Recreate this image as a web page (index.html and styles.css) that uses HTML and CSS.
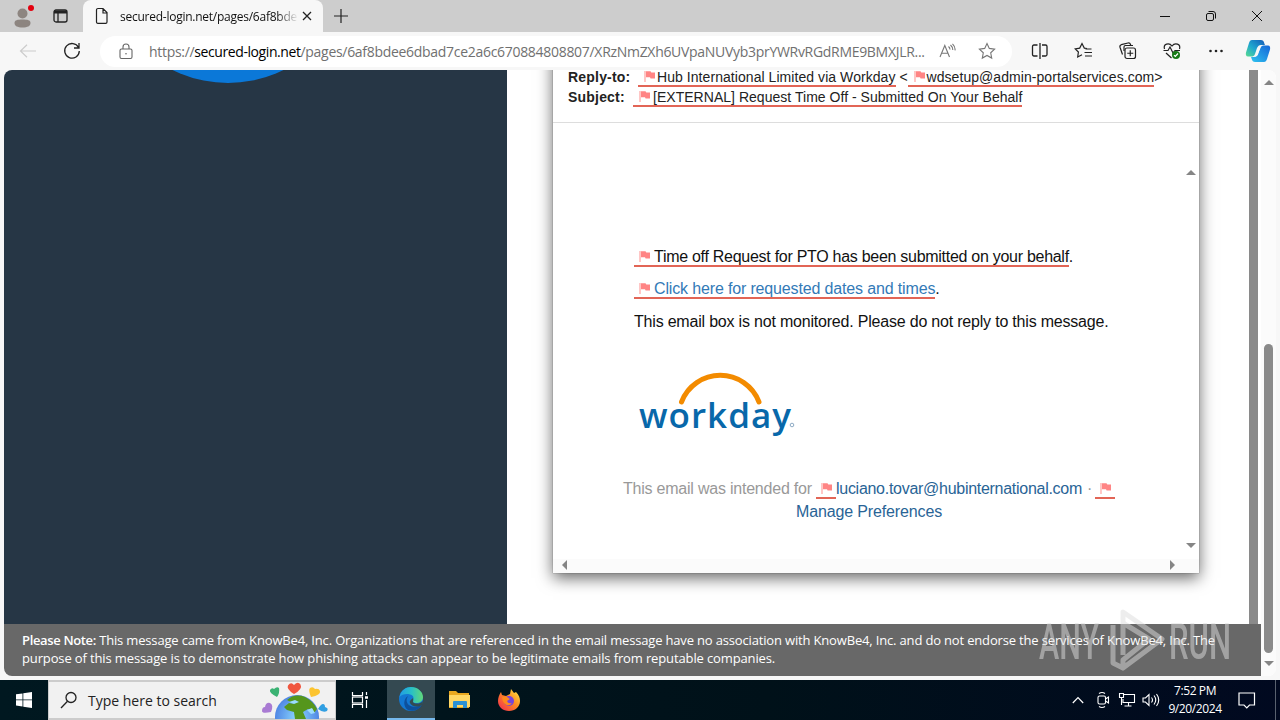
FILE: index.html
```html
<!DOCTYPE html>
<html lang="en">
<head>
  <meta charset="UTF-8">
  <title>secured-login.net</title>
  <link rel="stylesheet" href="styles.css">
</head>
<body>
  <svg class="defs" width="0" height="0">
    <symbol id="flag" viewBox="0 0 12 13">
      <path d="M1 1v11" stroke="#ffaaa8" stroke-width="1.3"/>
      <path d="M2 1.2h4.5l.8 1.3H11v6H6.6L6 7.3H2z" fill="#ff8585"/>
    </symbol>
  </svg>

  <div class="titlebar">
    <div class="profile">
      <svg width="22" height="26" viewBox="0 0 22 26">
        <circle cx="9.5" cy="11.5" r="5" fill="#8d8580"/>
        <path d="M1.5 21c0-3 3-3.500 8-3.500s8 .5 8 3.500-3 4.500-8 4.500-8-1.500-8-4.500z" fill="#8d8580"/>
        <circle cx="18" cy="6" r="3" fill="#e3000f"/>
      </svg>
    </div>
    <div class="workspaces">
      <svg width="16" height="16" viewBox="0 0 16 16" fill="none" stroke="#222" stroke-width="1.3">
        <rect x="1" y="2" width="13" height="12" rx="2"/>
        <path d="M1 4h13" stroke-width="3"/><path d="M5 5v9"/>
      </svg>
    </div>
    <div class="tab">
      <svg width="14" height="18" viewBox="0 0 14 18" fill="none" stroke="#222" stroke-width="1.2">
        <path d="M3 1.500h5l4 4V15a1.300 1.300 0 0 1-1.300 1.300H3A1.300 1.300 0 0 1 1.500 15V3A1.500 1.500 0 0 1 3 1.500zM8 1.500V6h4"/>
      </svg>
      <span class="tab-title">secured-login.net/pages/6af8bde</span>
      <svg width="10" height="10" viewBox="0 0 10 10" stroke="#222" stroke-width="1.3"><path d="M1 1l8 8M9 1l-8 8"/></svg>
    </div>
    <svg class="new-tab" width="14" height="14" viewBox="0 0 14 14" stroke="#222" stroke-width="1.2"><path d="M7 0v14M0 7h14"/></svg>
    <div class="window-buttons">
      <svg width="12" height="12" viewBox="0 0 12 12" stroke="#111"><path d="M1 6.500h10"/></svg>
      <svg width="12" height="12" viewBox="0 0 12 12" fill="none" stroke="#111"><rect x="1.500" y="3.500" width="7" height="7" rx="1.500"/><path d="M3.500 1.500H8A2.500 2.500 0 0 1 10.500 4v4.500"/></svg>
      <svg width="12" height="12" viewBox="0 0 12 12" stroke="#111"><path d="M1 1l10 10M11 1L1 11"/></svg>
    </div>
  </div>

  <div class="toolbar">
    <svg class="back" width="18" height="14" viewBox="0 0 18 14" fill="none" stroke="#ccc" stroke-width="1.2"><path d="M8 .8L1.500 7 8 13.200M1.500 7H17"/></svg>
    <svg class="reload" width="18" height="18" viewBox="0 0 18 18" fill="none" stroke="#222" stroke-width="1.300"><path d="M15.500 5.500A7.300 7.300 0 1 0 16.300 9M16 1v5h-5"/></svg>
    <div class="address">
      <svg width="14" height="17" viewBox="0 0 14 17" fill="none" stroke="#666" stroke-width="1.100"><rect x="1" y="6" width="12" height="9.500" rx="1.500"/><path d="M4 6V4a3 3 0 0 1 6 0v2"/><circle cx="7" cy="10.800" r=".8" fill="#666" stroke="none"/></svg>
      <span class="url">https://<b>secured-login.net</b>/pages/6af8bdee6dbad7ce2a6c670884808807/XRzNmZXh6UVpaNUVyb3prYWRvRGdRME9BMXJLR...</span>
      <svg class="read" width="17" height="16" viewBox="0 0 17 16" fill="none" stroke="#777" stroke-width="1.100"><path d="M1 14L5.800 2.500 10.500 14M2.700 10.200h6.200M9.500 3.500q1.500 1.200 1.500 3M11.500 2q2.300 2 2.300 5M13.500.8q3 3 2.500 6.500"/></svg>
      <svg class="star" width="18" height="18" viewBox="0 0 18 18" fill="none" stroke="#777" stroke-width="1.100"><path d="M9 1.500l2.300 4.900 5.300.7-3.900 3.700 1 5.300L9 13.500l-4.700 2.600 1-5.300L1.400 7.100l5.300-.7z"/></svg>
    </div>
    <div class="actions">
      <svg width="20" height="20" viewBox="0 0 20 20" fill="none" stroke="#222" stroke-width="1.300"><path d="M7.500 4H3.800A1.500 1.500 0 0 0 2.500 5.500v8A1.500 1.500 0 0 0 3.800 15h3.700M12 4h3.500A1.500 1.500 0 0 1 17 5.500v8a1.500 1.500 0 0 1-1.500 1.500H12M10 2v16"/></svg>
      <svg width="20" height="20" viewBox="0 0 20 20" fill="none" stroke="#222" stroke-width="1.200"><path d="M13 7.500l-2.700-.4L8 2.500 5.700 7.100l-4.500.7 3.200 3.200-.7 5L8 13.700M11.500 8h6M10.500 11.500H18M11 15h7"/></svg>
      <svg width="20" height="20" viewBox="0 0 20 20" fill="none" stroke="#222" stroke-width="1.200"><rect x="7" y="7" width="10.500" height="10.500" rx="2"/><path d="M12.250 9.300v6M9.250 12.250h6M4.500 13.500L2 6.200A2 2 0 0 1 3.300 3.700L10 2a2 2 0 0 1 2.400 1.300l.5 1.500M6 10V6q0-1.500 1.500-1.500H15"/></svg>
      <svg width="20" height="20" viewBox="0 0 20 20" fill="none" stroke="#222" stroke-width="1.200"><path d="M2.500 8C1 3 7 1 10 5c3-4 9-2 7.500 3M1.500 9.500H6l2-3.500 3 6 2-2.500h5M4 12l5.500 5"/><circle cx="14" cy="14" r="4" fill="#167a16" stroke="none"/><path d="M12 14.200l1.300 1.300L16 12.500" stroke="#fff"/></svg>
      <svg width="20" height="20" viewBox="0 0 20 20" fill="#222"><circle cx="4.500" cy="10" r="1.300"/><circle cx="10" cy="10" r="1.300"/><circle cx="15.500" cy="10" r="1.300"/></svg>
      <svg class="copilot" width="26" height="24" viewBox="0 0 26 24">
        <defs>
          <linearGradient id="cpA" x1="0" y1="1" x2="1" y2="0"><stop offset="0" stop-color="#58dc90"/><stop offset=".45" stop-color="#20a7cf"/><stop offset="1" stop-color="#1459b8"/></linearGradient>
          <linearGradient id="cpB" x1="0" y1="1" x2="1" y2="0"><stop offset="0" stop-color="#2fc3ef"/><stop offset="1" stop-color="#1465d8"/></linearGradient>
        </defs>
        <path d="M7 1h9c3 0 3 3 4 5h-4c-2 0-3 1-4 3l-2 6c-.6 2-2 2.500-4 2.500H3c-2 0-2.500-2-2-4L4 4c.6-2 1.500-3 3-3z" fill="url(#cpA)"/>
        <path d="M19 23h-9c-3 0-3-3-4-5h3c3 0 4-2 4.500-4l2-5c.6-2 2-2.500 4-2.500H23c2 0 2.500 2 2 4L22 20c-.6 2-1.500 3-3 3z" fill="url(#cpB)"/>
        <path d="M13.500 8l2.500-1.500-3.500 9.500-2.500 1.500z" fill="#f7f7f7"/>
      </svg>
    </div>
  </div>

  <div class="viewport">
    <div class="page">
      <div class="content">
        <div class="side"><div class="badge"></div></div>
        <div class="main">
          <div class="email">
            <div class="email-head">
              <div class="head-row reply"><b>Reply-to:</b><span class="flagged"><svg class="flag"><use href="#flag"/></svg>Hub International Limited via Workday</span><i>&lt;</i><span class="flagged second"><svg class="flag"><use href="#flag"/></svg>wdsetup@admin-portalservices.com</span><i>&gt;</i></div>
              <div class="head-row subject"><b>Subject:</b><span class="flagged"><svg class="flag"><use href="#flag"/></svg>[EXTERNAL] Request Time Off - Submitted On Your Behalf</span></div>
            </div>
            <div class="email-body">
              <div class="message">
                <p class="line"><span class="flagged l1"><svg class="flag"><use href="#flag"/></svg>Time off Request for PTO has been submitted on your behalf</span>.</p>
                <p class="line"><span class="flagged link l2"><svg class="flag"><use href="#flag"/></svg>Click here for requested dates and times</span>.</p>
                <p class="line plain">This email box is not monitored. Please do not reply to this message.</p>
                <svg class="workday" width="170" height="70" viewBox="0 0 170 70">
                  <path d="M47.500 33A41.500 41.500 0 0 1 125 33" fill="none" stroke="#f38b00" stroke-width="5" stroke-linecap="round"/>
                  <text x="5" y="59" textLength="152" lengthAdjust="spacing" class="workday-name">workday</text>
                  <circle cx="158" cy="56" r="1.800" fill="none" stroke="#8eabc5"/>
                </svg>
                <div class="foot">
                  <div class="foot-row"><span class="foot-text">This email was intended for</span><span class="flagged only"><svg class="flag"><use href="#flag"/></svg></span><a class="foot-mail">luciano.tovar@hubinternational.com</a><span class="dot">·</span><span class="flagged only"><svg class="flag"><use href="#flag"/></svg></span></div>
                  <div class="foot-prefs"><a>Manage Preferences</a></div>
                </div>
              </div>
              <div class="inner-scroll">
                <svg width="10" height="5"><path d="M0 5l5-5 5 5z"/></svg>
                <svg width="10" height="5"><path d="M0 0l5 5 5-5z"/></svg>
              </div>
            </div>
            <div class="bottom-scroll">
              <svg width="5" height="10"><path d="M5 0L0 5l5 5z"/></svg>
              <svg width="5" height="10"><path d="M0 0l5 5-5 5z"/></svg>
            </div>
          </div>
        </div>
        <div class="frame-bar"></div>
      </div>
      <div class="notice">
        <div class="notice-one"><b>Please Note:</b> This message came from KnowBe4, Inc. Organizations that are referenced in the email message have no association with KnowBe4, Inc. and do not endorse the services of KnowBe4, Inc. The</div>
        <div class="notice-two">purpose of this message is to demonstrate how phishing attacks can appear to be legitimate emails from reputable companies.</div>
      </div>
    </div>
    <div class="scrollbar">
      <svg width="10" height="5"><path d="M0 5l5-5 5 5z"/></svg>
      <div class="thumb"></div>
      <svg width="10" height="5"><path d="M0 0l5 5 5-5z"/></svg>
    </div>
  </div>

  <div class="taskbar">
    <div class="start"><svg width="16" height="16" viewBox="0 0 16 16" fill="#fff"><path d="M0 2.300L6.500 1.400v6.100H0zM7.300 1.300L16 0v7.500H7.300zM0 8.300h6.500v6.200L0 13.600zM7.300 8.300H16V16l-8.700-1.300z"/></svg></div>
    <div class="search">
      <svg width="18" height="18" viewBox="0 0 18 18" fill="none" stroke="#222" stroke-width="1.300"><circle cx="11" cy="6.500" r="5"/><path d="M7.500 10.200L1 17"/></svg>
      <span>Type here to search</span>
      <svg class="earth" width="72" height="38" viewBox="0 0 72 38">
        <defs><radialGradient id="sea"><stop offset="0" stop-color="#8bd6ff"/><stop offset="1" stop-color="#5087e4"/></radialGradient></defs>
        <circle cx="38" cy="36" r="22" fill="url(#sea)"/>
        <path d="M28 19q8-7 18-3 8 4 12 12l-3 4-6-4-5 3 3 7H36l-1-7-7-2-3-3 5-4 5 1z" fill="#55961c"/>
        <path d="M30 21l6-2 4 2-5 2zM48 29l5-2 3 5-4 1z" fill="#9bdcff"/>
        <path d="M35 13Q27 8 29 4.500q3-4 6-.5 4-4 6.500-.5Q44 8 35 13z" fill="#f0563f"/>
        <path d="M18 16q-8-4-7-7 2-3 4-1 3-3 5-1 1 5-2 9z" fill="#3bb273"/>
        <path d="M52 16q-3-7-1-9 3-2 5 1 4-1 5 2 1 4-9 6z" fill="#fcc430"/>
        <path d="M12 31q-9 2-9-1 0-4 3-4 1-5 5-4 4 2 1 9z" fill="#a97bd3"/>
        <path d="M59 28q3-5 5-5 2 0 2 3 4 1 2 4-4 2-9-2z" fill="#319fe2"/>
      </svg>
    </div>
    <div class="task view"><svg width="18" height="18" viewBox="0 0 18 18" fill="none" stroke="#fff" stroke-width="1.200"><path d="M1.500 1v3.500h10V1M1.500 17v-3.500h10V17M15.500 1v3M15.500 9v8"/><rect x="1.500" y="6" width="10" height="6"/><path d="M14 6.500h3" stroke-width="2.500"/></svg></div>
    <div class="task active">
      <svg width="26" height="26" viewBox="0 0 26 26">
        <defs><linearGradient id="edge" x1="0" y1="0" x2="1" y2="0"><stop offset="0" stop-color="#229ce5"/><stop offset=".5" stop-color="#28bfc7"/><stop offset="1" stop-color="#62d878"/></linearGradient></defs>
        <circle cx="13" cy="13" r="12" fill="#1377d2"/>
        <path d="M1.500 11C3 4 8 1 13 1c7 0 12 5 12 10 0 4-3 6-7 6-3 0-4-1-3-3 2-4-2-6-6-6-3 0-6 1-7.500 3z" fill="url(#edge)"/>
        <path d="M10 10c-4 6 1 13 11 10l3-1c-3 5-9 7-14 5-5-3-5-11 0-14z" fill="#0e509c"/>
        <path d="M15 12c1 3-1 4 1 5 3 1 6 1 9-2l-1 4c-5 3-11 1-12-2-1-2 1-3 3-5z" fill="#334b52"/>
      </svg>
    </div>
    <div class="task"><svg width="24" height="20" viewBox="0 0 24 20"><path d="M1 1h7l2 2h11v15H1z" fill="#e9a820"/><path d="M1 5h21v12H1z" fill="#ffd765"/><path d="M5 18v-6q0-1 1-1h12q1 0 1 1v6h-4v-3H9v3z" fill="#2b91d4"/></svg></div>
    <div class="task">
      <svg width="24" height="24" viewBox="0 0 24 24">
        <defs><linearGradient id="fire" x1="1" y1="0" x2="0" y2="1"><stop offset="0" stop-color="#fff04a"/><stop offset=".45" stop-color="#ff8b20"/><stop offset="1" stop-color="#f02455"/></linearGradient></defs>
        <path d="M4 4l1 3 4 1 4-2 1-5 3 4 2-1c3 3 4 6 4 9 0 6-5 10-11 10S1 19 1 13c0-3 1-6 3-9z" fill="url(#fire)"/>
        <circle cx="12" cy="13" r="5" fill="#7645dc"/>
        <path d="M5 9l5 0 3 2-3 2q1 3 5 2-3 4-7 1-3-3-3-7z" fill="#ff8a1c"/>
      </svg>
    </div>
    <div class="tray">
      <svg width="12" height="8" viewBox="0 0 12 8" fill="none" stroke="#fff" stroke-width="1.200"><path d="M.8 7L6 1.500 11.200 7"/></svg>
      <svg class="camera" width="14" height="18" viewBox="0 0 14 18" fill="none" stroke="#fff" stroke-width="1.100"><rect x="2" y="5" width="7.500" height="8" rx="1.500"/><path d="M9.500 8l3-2v6l-3-2M3 2.500q3-2 6 0M3 15.500q3 2 6 0"/></svg>
      <svg class="network" width="18" height="16" viewBox="0 0 18 16" fill="none" stroke="#fff" stroke-width="1.100"><path d="M6 2.500h10.500v8H5V7M10.500 10.500V14M6.500 14h7M1.500 1.500h4v4h-4zM3.500 5.500V13"/></svg>
      <svg class="sound" width="18" height="14" viewBox="0 0 18 14" fill="none" stroke="#fff" stroke-width="1.100"><path d="M1 5h2.500L7 1.500v11L3.500 9H1zM9.500 4.500q2 2.500 0 5M12 2.500q3.500 4.500 0 9M14.500 1q4.500 6 0 12"/></svg>
    </div>
    <div class="clock"><div class="time">7:52 PM</div><div class="date">9/20/2024</div></div>
    <svg class="notify" width="18" height="17" viewBox="0 0 18 17" fill="none" stroke="#fff" stroke-width="1.200"><path d="M1 1h15.500v12h-5L8.800 15.800 6 13H1z"/></svg>
    <div class="desktop-edge"></div>
  </div>

  <svg class="watermark" width="200" height="70" viewBox="0 0 200 70">
    <text x="4" y="51" textLength="60" lengthAdjust="spacingAndGlyphs">ANY</text>
    <path d="M78 17V55L88 60M88 47V4L127 31 88 60V52L114 31 88 15" fill="none" stroke-linejoin="round"/>
    <text x="134" y="51" textLength="62" lengthAdjust="spacingAndGlyphs">RUN</text>
  </svg>
</body>
</html>
```
FILE: styles.css
```css
* {
  box-sizing: border-box;
}

body {
  margin: 0;
  width: 1280px;
  height: 720px;
  overflow: hidden;
  position: relative;
  background: #f7f7f7;
  font-family: "Open Sans", "Noto Sans", sans-serif;
  color: #222;
}

svg {
  display: block;
  flex: none;
}

.defs {
  display: none;
}

/* browser chrome */
.titlebar {
  display: flex;
  align-items: center;
  height: 32px;
  background: #cdcdcd;
}

.profile {
  width: 53px;
  height: 32px;
  padding: 2px 0 0 13px;
}

.workspaces {
  width: 30px;
}

.tab {
  display: flex;
  align-items: center;
  width: 240px;
  height: 32px;
  padding-left: 12px;
  background: #f7f7f7;
  border-radius: 8px 8px 0 0;
}

.tab-title {
  width: 182px;
  margin: 0 0 0 11px;
  font-size: 12px;
  letter-spacing: -0.25px;
  white-space: nowrap;
  color: #111;
  -webkit-mask-image: linear-gradient(90deg, #000 86%, transparent 98%);
}

.new-tab {
  margin-left: 11px;
}

.window-buttons {
  display: flex;
  gap: 34px;
  margin-left: auto;
  padding-right: 17px;
}

.toolbar {
  display: flex;
  align-items: center;
  height: 38px;
}

.back {
  margin-left: 19px;
}

.reload {
  margin-left: 26px;
}

.address {
  display: flex;
  align-items: center;
  width: 912px;
  height: 31px;
  margin-left: 19px;
  padding-left: 19px;
  background: #fff;
  border-radius: 16px;
}

.url {
  width: 776px;
  margin-left: 16px;
  font-size: 14px;
  letter-spacing: -0.3px;
  white-space: nowrap;
  color: #707070;
}

.url b {
  font-weight: 400;
  letter-spacing: -0.42px;
  color: #000;
}

.read {
  margin-left: 14px;
}

.star {
  margin-left: 22px;
}

.actions {
  display: flex;
  align-items: center;
  gap: 24px;
  margin-left: 18px;
}

.copilot {
  margin-left: -5px;
}

/* page */
.viewport {
  display: flex;
  width: 1272px;
  height: 606px;
  margin-left: 4px;
  border-radius: 8px;
  overflow: hidden;
  background: #fff;
}

.page {
  width: 1257px;
}

.content {
  display: flex;
  height: 554px;
  overflow: hidden;
}

.side {
  width: 503px;
  background: #263645;
  overflow: hidden;
}

.badge {
  width: 250px;
  height: 250px;
  margin: -237px 0 0 99px;
  border-radius: 50%;
  background: #0b78d8;
}

.main {
  width: 742px;
  overflow: hidden;
}

.frame-bar {
  width: 9px;
  background: #8a8a8a;
}

.email {
  width: 646px;
  height: 533px;
  margin: -30px 0 0 46px;
  padding-top: 30px;
  background: #fff;
  box-shadow: 0 5px 15px rgba(0, 0, 0, 0.6), 0 0 1px rgba(0, 0, 0, 0.5);
  font-family: "Liberation Sans", Arial, sans-serif;
}

.email-head {
  height: 53px;
  padding-left: 15px;
  border-bottom: 1px solid #ddd;
  font-size: 14px;
  overflow: hidden;
}

.head-row {
  display: flex;
  height: 20px;
  line-height: 16px;
  letter-spacing: 0.03px;
  white-space: nowrap;
}

.head-row b {
  width: 65px;
  letter-spacing: 0.2px;
}

.reply {
  margin-top: -1px;
  letter-spacing: 0.06px;
}

.reply b {
  width: 70px;
}

.head-row i {
  font-style: normal;
}

.reply i:nth-of-type(1) {
  width: 12px;
  padding-left: 4px;
}

.flagged {
  height: 18px;
  border-bottom: 2px solid #e26556;
}

.flag {
  display: inline-block;
  width: 12px;
  height: 13px;
  margin: 0 3px 0 5px;
  vertical-align: -1px;
}

.head-row .flag {
  margin: 0 2px 0 6px;
}

.reply .flag {
  margin-right: 1px;
}

.email-body {
  display: flex;
  height: 436px;
}

.message {
  width: 630px;
  padding-top: 123px;
  font-size: 16px;
  color: #111;
}

.line {
  display: flex;
  height: 32px;
  margin: 0 0 0 81px;
  line-height: 22px;
  white-space: nowrap;
}

.line .flagged {
  height: 21px;
}

.l1 {
  letter-spacing: -0.28px;
}

.l2 {
  letter-spacing: -0.15px;
}

.plain {
  padding-top: 1px;
  letter-spacing: -0.2px;
}

.link {
  color: #337ab7;
}

.workday {
  margin: 27px 0 0 81px;
}

.workday-name {
  font-family: "Open Sans", sans-serif;
  font-size: 35px;
  font-weight: 600;
  fill: #0868aa;
}

.foot {
  padding: 40px 0 0 70px;
  line-height: 20px;
}

.foot-row {
  display: flex;
  height: 23px;
  white-space: nowrap;
  color: #999;
}

.foot a {
  color: #296496;
}

.foot-text {
  width: 193px;
  letter-spacing: -0.22px;
}

.foot .foot-mail {
  width: 247px;
  letter-spacing: -0.28px;
}

.only {
  width: 20px;
  height: 20px;
}

.dot {
  width: 12px;
  padding-left: 4px;
}

.foot-prefs {
  padding-left: 173px;
  letter-spacing: -0.14px;
}

.inner-scroll {
  display: flex;
  flex-direction: column;
  justify-content: space-between;
  width: 16px;
  padding: 47px 0 11px 3px;
  fill: #858585;
}

.bottom-scroll {
  display: flex;
  justify-content: space-between;
  height: 14px;
  padding: 1px 24px 0 9px;
  background: #fbfbfb;
  fill: #858585;
}

.notice {
  height: 52px;
  padding: 7px 0 0 18px;
  background: #686868;
  color: #fff;
  font-size: 13px;
  line-height: 18px;
  white-space: nowrap;
}

.notice b {
  font-weight: 600;
  letter-spacing: -0.35px;
}

.notice-one {
  letter-spacing: -0.165px;
}

.notice-two {
  letter-spacing: -0.13px;
}

.scrollbar {
  display: flex;
  flex-direction: column;
  align-items: center;
  width: 15px;
  padding-top: 10px;
  background: #fbfbfb;
  fill: #858585;
}

.thumb {
  width: 9px;
  height: 309px;
  margin: 259px 0 8px;
  border-radius: 5px;
  background: #8a8a8a;
}

/* taskbar */
.taskbar {
  display: flex;
  align-items: center;
  height: 40px;
  margin-top: 4px;
  background: linear-gradient(90deg, #001820, #001119 60%, #010920);
}

.start {
  width: 48px;
  padding-left: 16px;
}

.search {
  display: flex;
  align-items: center;
  width: 288px;
  height: 40px;
  padding-left: 11px;
  background: #f1f1f1;
  border: 2px solid #ccc;
  border-width: 2px 1px 2px 1px;
}

.search span {
  width: 165px;
  margin-left: 10px;
  font-size: 14px;
  white-space: nowrap;
}

.earth {
  margin-left: 6px;
}

.task {
  display: flex;
  align-items: center;
  justify-content: center;
  width: 49px;
  height: 40px;
}

.task.view {
  width: 51px;
  padding-right: 3px;
}

.task.active {
  width: 48px;
  background: #344951;
  border-bottom: 2px solid #76b9ed;
}

.tray {
  display: flex;
  align-items: center;
  width: 93px;
  margin-left: auto;
}

.camera {
  margin-left: 12px;
}

.network {
  margin-left: 8px;
}

.sound {
  margin-left: 6px;
}

.clock {
  width: 60px;
  color: #fff;
  font-size: 12px;
  letter-spacing: -0.4px;
  line-height: 18px;
  text-align: center;
}

.notify {
  margin-left: 13px;
}

.desktop-edge {
  width: 1px;
  height: 40px;
  margin: 0 4px 0 19px;
  background: #59616f;
}

/* overlay mark */
.watermark {
  position: absolute;
  left: 1035px;
  top: 608px;
  opacity: 0.5;
}

.watermark text {
  font-family: Roboto, sans-serif;
  font-size: 50px;
  font-weight: 500;
  fill: #ddd;
}

.watermark path {
  stroke: #ddd;
  stroke-width: 5;
}
```
